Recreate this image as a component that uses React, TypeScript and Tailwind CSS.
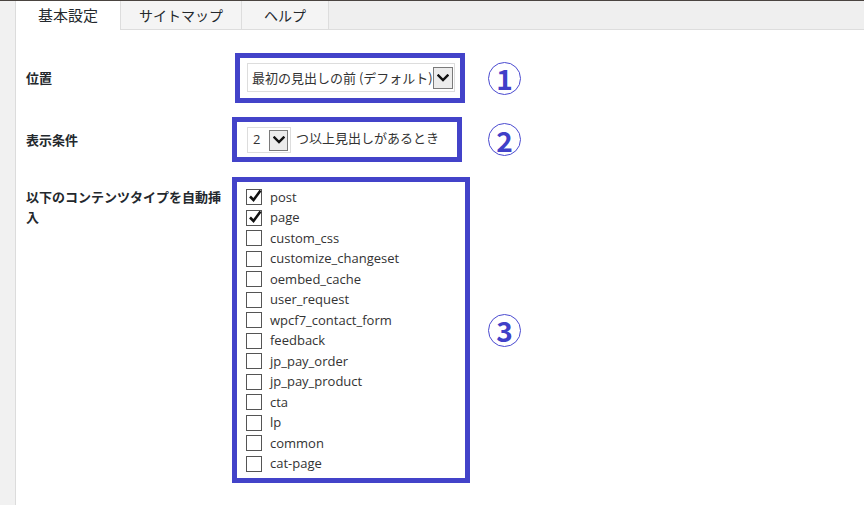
import React from 'react';

const jp = { fontFamily: '"Noto Sans CJK JP", "Noto Sans", sans-serif' };
const latin = { fontFamily: '"Open Sans", "Noto Sans CJK JP", sans-serif' };

const postTypes = [
  { name: 'post', checked: true },
  { name: 'page', checked: true },
  { name: 'custom_css', checked: false },
  { name: 'customize_changeset', checked: false },
  { name: 'oembed_cache', checked: false },
  { name: 'user_request', checked: false },
  { name: 'wpcf7_contact_form', checked: false },
  { name: 'feedback', checked: false },
  { name: 'jp_pay_order', checked: false },
  { name: 'jp_pay_product', checked: false },
  { name: 'cta', checked: false },
  { name: 'lp', checked: false },
  { name: 'common', checked: false },
  { name: 'cat-page', checked: false },
];

const Chevron = () => (
  <svg width="12" height="8" viewBox="0 0 12 8">
    <path d="M1.5 1.5 L6 6 L10.5 1.5" fill="none" stroke="#111" strokeWidth="2.4" strokeLinecap="square" />
  </svg>
);

const SelectButton = ({ className }: { className: string }) => (
  <div className={`flex items-center justify-center border border-[#7a7a7a] bg-[#ececec] ${className}`}>
    <Chevron />
  </div>
);

const Check = () => (
  <svg width="14" height="14" viewBox="0 0 14 14" className="absolute -top-[1px] left-[1px]">
    <path d="M2 7.5 L5.5 11 L12.5 1.5" fill="none" stroke="#111" strokeWidth="2.6" />
  </svg>
);

// circled marker: thin ring with a heavy digit
const Circled = ({ n }: { n: string }) => (
  <span
    className="w-[33px] h-[33px] rounded-full border border-[#4a4ad0] flex items-center justify-center text-[28px] leading-none font-bold text-[#4040c8]"
    style={jp}
  >
    {n}
  </span>
);

const App = () => {
  return (
    <div className="w-[864px] h-[505px] overflow-hidden border-t border-[#4a4440] flex bg-white">
      {/* left strip */}
      <div className="w-[16px] bg-[#f1f1f1] border-r border-[#dcdcdc]" />

      <div className="flex-1 flex flex-col">
        {/* tabs */}
        <div className="h-[29px] bg-[#efefef] border-b border-[#dddddd] flex text-[#23282d]" style={jp}>
          <div className="w-[105px] h-[29px] bg-white border-r border-[#dddddd] flex items-center justify-center text-[15px]">
            基本設定
          </div>
          <div className="w-[121px] bg-[#f4f4f4] border-r border-[#dddddd] flex items-center justify-center text-[14px]">
            サイトマップ
          </div>
          <div className="w-[87px] bg-[#f4f4f4] border-r border-[#dddddd] flex items-center justify-center text-[14px]">
            ヘルプ
          </div>
        </div>

        {/* settings */}
        <div className="pl-[10px] pt-[23px] flex flex-col text-[#23282d]">
          {/* position */}
          <div className="flex items-center">
            <div className="w-[205px] text-[13px] font-bold" style={jp}>位置</div>
            <div className="w-[257px] flex">
              <div className="ml-[4px] w-[230px] h-[50px] border-[5px] border-[#4343c9] pl-[7px] pt-[5px]">
                <div className="w-[208px] h-[29px] border border-[#dddddd] bg-white flex items-center pl-[4px] pr-[1px]">
                  <span className="flex-1 text-[13px] text-[#333] whitespace-nowrap" style={jp}>
                    最初の見出しの前 (デフォルト)
                  </span>
                  <SelectButton className="w-[20px] h-[22px]" />
                </div>
              </div>
            </div>
            <Circled n="1" />
          </div>

          {/* condition */}
          <div className="flex items-center mt-[14px]">
            <div className="w-[205px] text-[13px] font-bold" style={jp}>表示条件</div>
            <div className="w-[257px] flex">
              <div className="ml-[1px] w-[230px] h-[45px] border-[5px] border-[#4343c9] pl-[10px] pt-[5px] flex items-start">
                <div className="w-[44px] h-[26px] border border-[#dddddd] bg-white flex items-center pl-[5px] pr-[2px]">
                  <span className="flex-1 text-[13px] text-[#333]" style={latin}>2</span>
                  <SelectButton className="w-[19px] h-[21px]" />
                </div>
                <span className="ml-[5px] mt-[1px] text-[13px] text-[#333] whitespace-nowrap" style={jp}>
                  つ以上見出しがあるとき
                </span>
              </div>
            </div>
            <Circled n="2" />
          </div>

          {/* post types */}
          <div className="flex items-center mt-[15px]">
            <div className="w-[205px] self-start pt-[10px] pr-[6px] text-[13px] leading-[20px] font-bold" style={jp}>
              以下のコンテンツタイプを自動挿入
            </div>
            <div className="w-[257px] flex">
              <div className="ml-[1px] w-[238px] h-[306px] border-[5px] border-[#4343c9] pl-[9px] pt-[5px]">
                {postTypes.map((t) => (
                  <div key={t.name} className="h-[20.5px] flex items-center">
                    <div className="relative w-[16px] h-[16px] border border-[#555] bg-white">
                      {t.checked && <Check />}
                    </div>
                    <span className="ml-[8px] text-[13px] text-[#333]" style={latin}>
                      {t.name}
                    </span>
                  </div>
                ))}
              </div>
            </div>
            <Circled n="3" />
          </div>
        </div>
      </div>
    </div>
  );
};

export default App;
